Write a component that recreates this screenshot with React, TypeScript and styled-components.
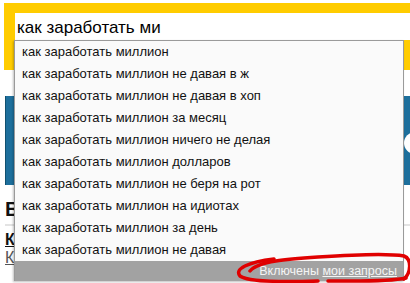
import styled, { createGlobalStyle } from "styled-components";

const GlobalStyle = createGlobalStyle`
  html, body {
    margin: 0;
    padding: 0;
    background: #ffffff;
  }
  body {
    font-family: "Liberation Sans", Arial, sans-serif;
  }
`;

const Page = styled.div`
  position: relative;
  width: 410px;
  height: 283px;
  overflow: hidden;
  background: #ffffff;
`;

const SearchFrame = styled.div`
  margin: 3px 0 0 4px;
  height: 67px;
  box-sizing: border-box;
  padding: 10px 0 0 11px;
  background: #ffcc00;
`;

const SearchInput = styled.div`
  height: 27px;
  box-sizing: border-box;
  background: #ffffff;
  padding: 5px 0 0 2px;
  font-size: 17px;
  color: #000;
  white-space: nowrap;
`;

const Banner = styled.div`
  margin: 26px 0 0 5px;
  height: 89px;
  background: #1d6f9c;
  border-left: 1px solid #10506f;
  display: flex;
  justify-content: flex-end;
  align-items: center;
`;

const BannerButton = styled.div`
  width: 40px;
  height: 22px;
  margin-right: -34px;
  margin-top: 4px;
  border-radius: 11px;
  background: #ffffff;
`;

const Content = styled.div`
  padding: 12px 0 0 5px;
`;

const Heading = styled.div`
  font-size: 20px;
  font-weight: bold;
  color: #111;
  line-height: 24px;
  padding-bottom: 3px;
  border-bottom: 2px solid #e3e3e3;
`;

const BoldLink = styled.a`
  display: block;
  margin-top: 4px;
  font-size: 16px;
  font-weight: bold;
  color: #111;
  text-decoration: underline;
  line-height: 19px;
`;

const PlainLink = styled.a`
  display: block;
  font-size: 16px;
  color: #555;
  text-decoration: underline;
  line-height: 18px;
`;

const Dropdown = styled.div`
  position: absolute;
  top: 40px;
  left: 14px;
  width: 390px;
  box-sizing: border-box;
  border: 1px solid #9a9a9a;
  border-bottom: none;
  background: #fafafa;
  box-shadow: -1px 1px 2px rgba(0, 0, 0, 0.25);
`;

const Suggestion = styled.div`
  height: 22px;
  line-height: 22px;
  padding-left: 7px;
  font-size: 13px;
  color: #111;
  white-space: nowrap;
`;

const Footer = styled.div`
  height: 20px;
  line-height: 20px;
  background: #a2a2a2;
  text-align: right;
  padding-right: 6px;
  font-size: 12.5px;
  color: #f4f4f4;
  white-space: nowrap;
`;

const FooterLink = styled.span`
  text-decoration: underline;
`;

const Annotation = styled.svg`
  position: absolute;
  left: 228px;
  top: 249px;
  width: 182px;
  height: 34px;
  overflow: visible;
`;

const suggestions = [
  "как заработать миллион",
  "как заработать миллион не давая в ж",
  "как заработать миллион не давая в хоп",
  "как заработать миллион за месяц",
  "как заработать миллион ничего не делая",
  "как заработать миллион долларов",
  "как заработать миллион не беря на рот",
  "как заработать миллион на идиотах",
  "как заработать миллион за день",
  "как заработать миллион не давая",
];

export default function App() {
  return (
    <Page>
      <GlobalStyle />
      <SearchFrame>
        <SearchInput>как заработать ми</SearchInput>
      </SearchFrame>
      <Banner>
        <BannerButton />
      </Banner>
      <Content>
        <Heading>В</Heading>
        <BoldLink>К</BoldLink>
        <PlainLink>К</PlainLink>
      </Content>
      <Dropdown>
        {suggestions.map((s) => (
          <Suggestion key={s}>{s}</Suggestion>
        ))}
        <Footer>
          Включены <FooterLink>мои запросы</FooterLink>
        </Footer>
      </Dropdown>
      <Annotation viewBox="0 0 182 34">
        <path
          d="M22 22 C 30 12, 60 10, 90 8 C 120 6, 160 4, 176 7 C 184 10, 183 24, 176 30"
          fill="none"
          stroke="#e00000"
          strokeWidth="3.5"
          strokeLinecap="round"
        />
        <path
          d="M46 10 C 20 13, 6 20, 12 27 C 20 33, 60 33, 90 32 M 100 32 C 130 32, 160 33, 178 29"
          fill="none"
          stroke="#e00000"
          strokeWidth="3.5"
          strokeLinecap="round"
        />
      </Annotation>
    </Page>
  );
}
